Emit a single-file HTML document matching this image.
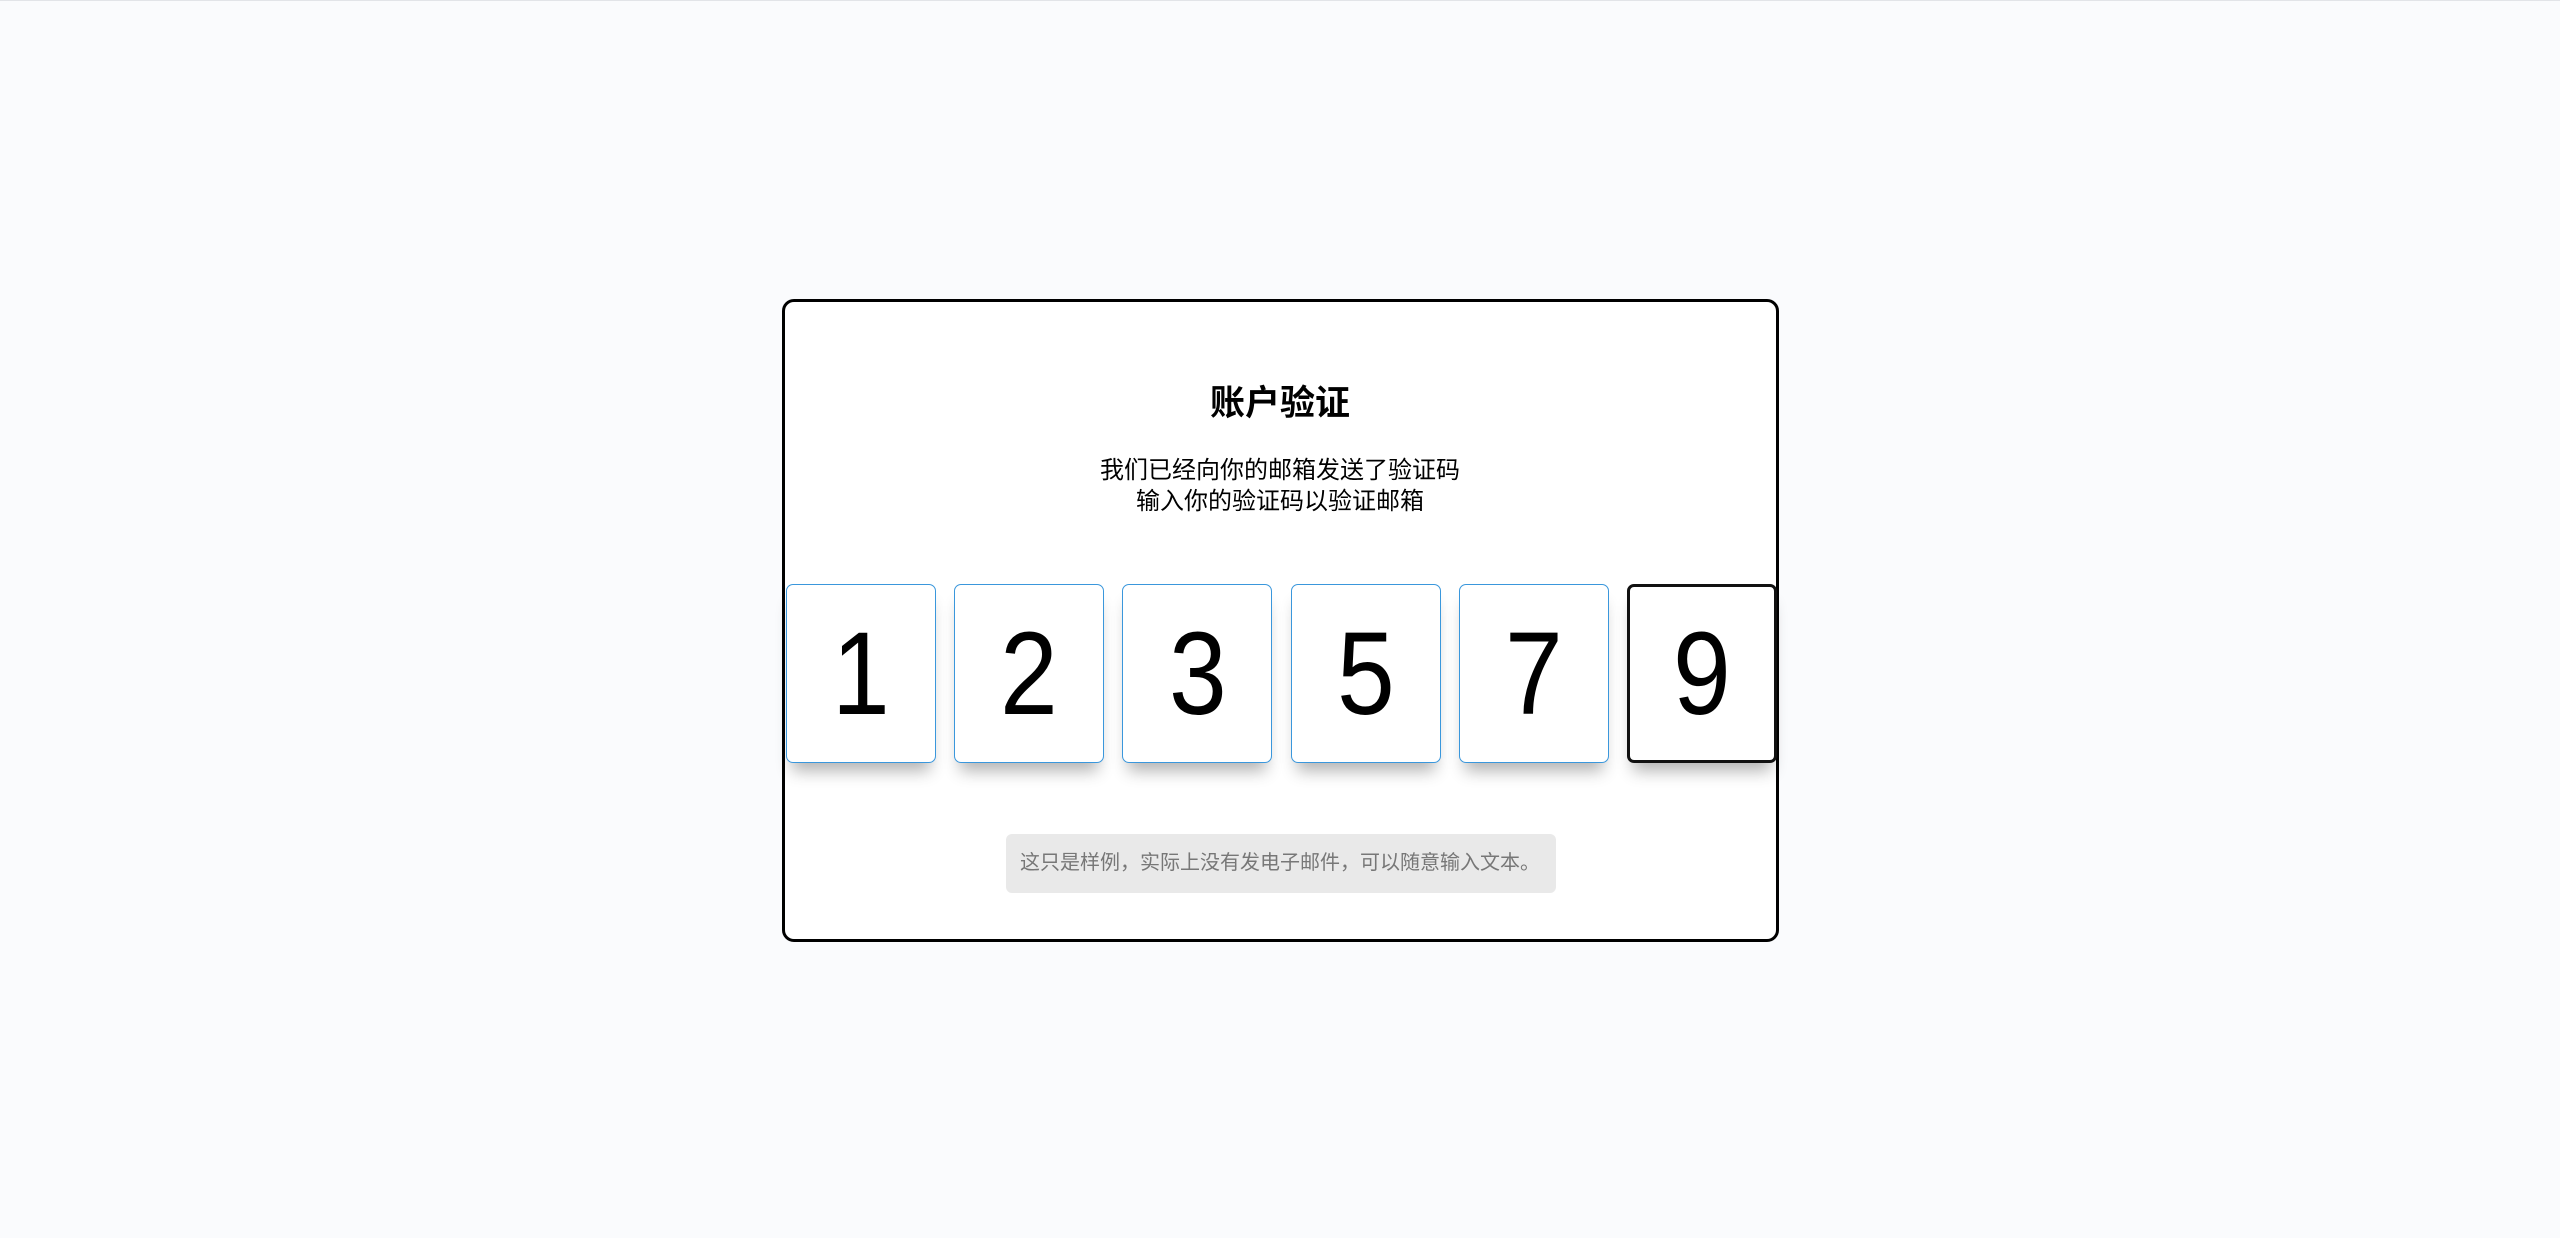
<!DOCTYPE html>
<html><head><meta charset="utf-8"><style>
html,body{margin:0;padding:0;}
body{width:2560px;height:1238px;background:#fafbfd;border-top:1px solid #e2e4e8;box-sizing:border-box;position:relative;font-family:"Liberation Sans","Noto Sans CJK SC",sans-serif;}
.card{position:absolute;left:782px;top:298px;width:991px;height:637px;border:3px solid #000;border-radius:12px;background:#fff;}
h1{position:absolute;left:0;right:0;top:381px;margin:0;text-align:center;font-size:35px;font-weight:bold;line-height:44px;color:#000;}
.sub{position:absolute;left:0;right:0;top:454px;text-align:center;font-size:24px;line-height:31px;color:#000;}
.boxes{position:absolute;left:786px;top:583px;width:991px;display:flex;justify-content:space-between;}
.b{width:148px;height:177px;border:1px solid #3a97dc;border-radius:7px;background:#fff;box-shadow:0 14px 16px -6px rgba(0,0,0,0.3);display:flex;align-items:center;justify-content:center;font-size:118px;color:#000;font-family:"Liberation Sans",sans-serif;}
.b span{display:inline-block;transform:scaleX(0.88);}
.b.a{border:3px solid #111;width:144px;height:173px;}
.note{position:absolute;left:1006px;top:833px;width:550px;height:59px;background:#e9e9e9;border-radius:6px;font-size:20px;color:#777;line-height:59px;text-indent:14px;}
</style></head><body>
<div class="card"></div>
<h1>账户验证</h1>
<div class="sub">我们已经向你的邮箱发送了验证码<br>输入你的验证码以验证邮箱</div>
<div class="boxes"><div class="b"><span>1</span></div><div class="b"><span>2</span></div><div class="b"><span>3</span></div><div class="b"><span>5</span></div><div class="b"><span>7</span></div><div class="b a"><span>9</span></div></div>
<div class="note">这只是样例，实际上没有发电子邮件，可以随意输入文本。</div>
</body></html>
